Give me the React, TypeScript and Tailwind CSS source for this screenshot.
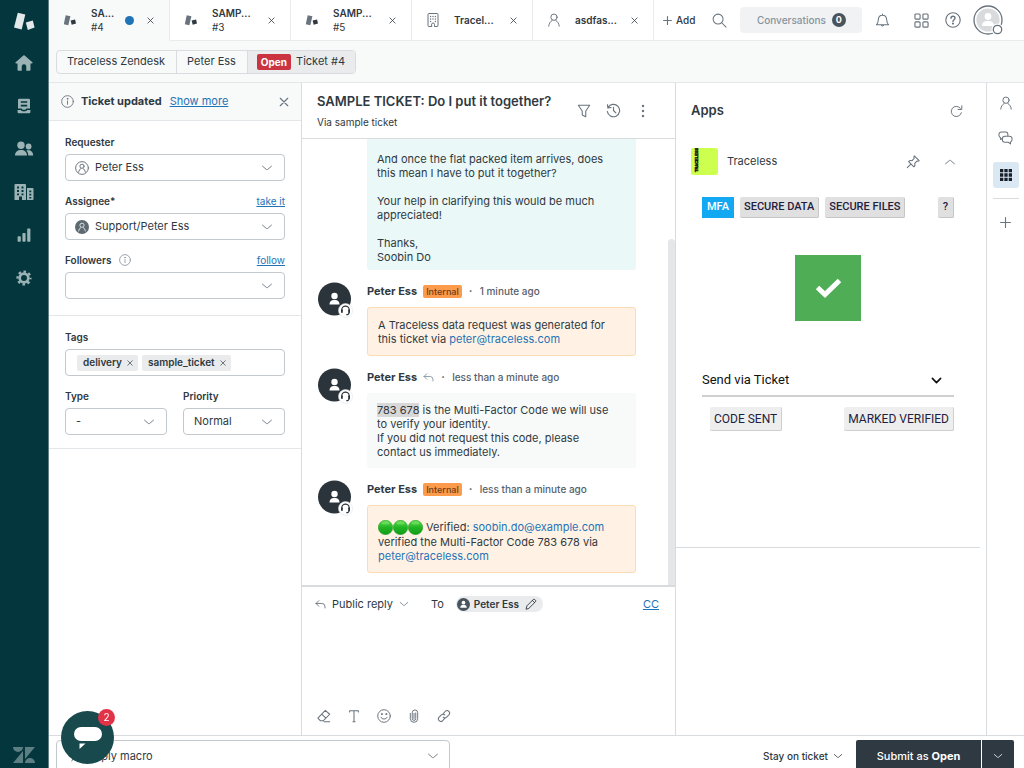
import React from "react";

type IconProps = { className?: string };
type SvgProps = IconProps & { children: React.ReactNode; box?: string; sw?: number };

function Line({ className = "size-3", children, box = "0 0 16 16", sw = 1.2 }: SvgProps) {
  return (
    <svg className={`shrink-0 ${className}`} viewBox={box} fill="none" stroke="currentColor" strokeWidth={sw} strokeLinecap="round" strokeLinejoin="round" aria-hidden="true">
      {children}
    </svg>
  );
}

function Solid({ className = "size-4", children, box = "0 0 20 20" }: SvgProps) {
  return (
    <svg className={`shrink-0 ${className}`} viewBox={box} fill="currentColor" aria-hidden="true">
      {children}
    </svg>
  );
}

const Chevron = ({ className = "size-3" }: IconProps) => (
  <Line className={className}><path d="M2 5.5l5.3 4.6c.4.35 1 .35 1.4 0L14 5.5" /></Line>
);
const Cross = ({ className = "size-2" }: IconProps) => (
  <Line className={className} box="0 0 8 8" sw={0.9}><path d="M1 1l6 6M7 1L1 7" /></Line>
);
const Person = ({ className = "size-[14px]" }: IconProps) => (
  <Line className={className} sw={1.1}><circle cx="8" cy="4.8" r="3.6" /><path d="M2 15c.3-3 1.800-5.200 4-6.600M14 15c-.3-3-1.800-5.200-4-6.600" /></Line>
);
const Building = ({ className = "size-[14px]" }: IconProps) => (
  <Line className={className} box="0 0 14 14" sw={1}>
    <path d="M5.500 13.500H3a1 1 0 0 1-1-1v-11a1 1 0 0 1 1-1h8a1 1 0 0 1 1 1v11a1 1 0 0 1-1 1H8.500v-2a1.500 1.500 0 0 0-3 0z" />
    <path d="M4.600 3.500h.01M7 3.500h.01M9.400 3.500h.01M4.600 6h.01M7 6h.01M9.400 6h.01M4.600 8.500h.01M9.400 8.500h.01" strokeWidth="1.400" />
  </Line>
);
const Info = ({ className = "size-3" }: IconProps) => (
  <Line className={className} sw={1.1}><circle cx="8" cy="8" r="7.2" /><path d="M8 7.200v4.300" /><circle cx="8" cy="4.700" r=".5" fill="currentColor" /></Line>
);
const Reply = ({ className = "size-3" }: IconProps) => (
  <Line className={className} sw={1.3}><path d="M5.500 2.500L1.500 6.500l4 4M1.500 6.500H10a4.500 4.500 0 0 1 4.500 4.500v2" /></Line>
);
const TicketMark = () => (
  <svg className="size-[14px] shrink-0" viewBox="0 0 14 12" aria-hidden="true">
    <path d="M2.700 1.200L7.400 2.200 5.300 11.300.8 10.300z" fill="#68737d" />
    <path d="M7.600 6.600l4.500-1 .9 4-4.300 1.200z" fill="#2f3941" />
  </svg>
);

const navIcons: { name: string; icon: React.ReactNode }[] = [
  { name: "Home", icon: <Solid className="size-[18px]"><path d="M9.300 1.600a1 1 0 0 1 1.400 0l8.600 7.600c.6.600.3 1.300-.5 1.300h-1.600v7a1 1 0 0 1-1 1h-3.700v-4.600a2.500 2.500 0 0 0-5 0v4.600H3.800a1 1 0 0 1-1-1v-7H1.200c-.8 0-1.100-.7-.5-1.300z" /></Solid> },
  { name: "Views", icon: <Solid className="size-4"><path fillRule="evenodd" d="M4 1h12a1.500 1.500 0 0 1 1.500 1.500V13H13c-.4 1.300-1.500 1.800-3 1.800S7.400 14.300 7 13H2.500V2.500A1.500 1.500 0 0 1 4 1zm2 3v2h8V4zm0 4.500v2h8v-2zM2 15h4c.8 1.300 2.200 1.800 4 1.800s3.200-.5 4-1.800h4v2.500a1.500 1.500 0 0 1-1.500 1.500h-13A1.500 1.500 0 0 1 2 17.500z" /></Solid> },
  { name: "Customers", icon: <Solid className="size-5"><circle cx="7" cy="6.300" r="3.700" /><circle cx="14.600" cy="7.500" r="2.900" /><path d="M1 16.500c0-3.500 2.500-5.500 6-5.500s6 2 6 5.500zM14.300 16.500c0-2-.8-3.800-2-4.900 3.800-1.200 6.900 1 6.900 4.900z" /></Solid> },
  { name: "Organizations", icon: <Solid className="size-5"><path fillRule="evenodd" d="M1.500 2h9.500a1 1 0 0 1 1 1v15H8v-3.500H5V18H1a.5.5 0 0 1-.5-.5V3a1 1 0 0 1 1-1zM3 4.500v2h2v-2zm4.500 0v2h2v-2zM3 8v2h2V8zm4.500 0v2h2V8zM3 11.400v1.800h2v-1.800zm4.500 0v1.800h2v-1.800zM13 6h5.500a1 1 0 0 1 1 1v10a1 1 0 0 1-1 1H13zm2.300 2.500v1.800h2V8.500zm0 3.300v1.800h2v-1.800zm0 3.200v1.500h2V15z" /></Solid> },
  { name: "Reporting", icon: <Solid className="size-4"><rect x="2" y="11.500" width="4" height="7" rx="1" /><rect x="8" y="7.500" width="4" height="11" rx="1" /><rect x="14" y="2" width="4" height="16.500" rx="1" /></Solid> },
  { name: "Admin", icon: <svg className="size-4 shrink-0" viewBox="0 0 20 20" fill="none" stroke="currentColor" aria-hidden="true"><circle cx="10" cy="10" r="5.400" strokeWidth="3.400" /><circle cx="10" cy="10" r="8.100" strokeWidth="2.800" strokeDasharray="3.200 3.160" strokeDashoffset="1.600" /></svg> },
];

function Sidebar() {
  return (
    <nav className="flex w-[49px] shrink-0 flex-col items-center border-r border-[#5f7f84] bg-[#03363d] text-[#9cb3b5]" aria-label="Main">
      <svg className="mt-3 h-[19px] w-[22px] shrink-0" viewBox="0 0 22 19" aria-hidden="true">
        <path d="M4.800.8l7.500 1.800-3.600 15L1 15.500z" fill="#e3e8e8" />
        <path d="M12.800 10.600l7-2 1.800 7-6.800 2.400z" fill="#e3e8e8" />
      </svg>
      <ul className="mt-3 flex w-full flex-col">
        {navIcons.map((n) => (
          <li key={n.name}>
            <button aria-label={n.name} className="flex h-[43px] w-full items-center justify-center pb-1">{n.icon}</button>
          </li>
        ))}
      </ul>
      <svg className="mt-auto mb-1 h-[18px] w-[22px] shrink-0 text-[#5c7f83]" viewBox="0 0 22 18" fill="currentColor" aria-hidden="true">
        <path d="M0 1h10a5 5 0 0 1-10 0zM10 5v12H0zM12 1h10L12 13zM12 17a5 5 0 0 1 10 0z" />
      </svg>
    </nav>
  );
}

type Tab = { title: string; sub?: string; kind: "ticket" | "org" | "user"; active?: boolean };
const tabs: Tab[] = [
  { title: "SA...", sub: "#4", kind: "ticket", active: true },
  { title: "SAMP...", sub: "#3", kind: "ticket" },
  { title: "SAMP...", sub: "#5", kind: "ticket" },
  { title: "Tracel...", kind: "org" },
  { title: "asdfas...", kind: "user" },
];

function TabItem({ tab }: { tab: Tab }) {
  return (
    <div className={`flex w-[121px] shrink-0 items-center border-r border-b border-r-[#e9ebed] pr-[13px] pl-[14px] ${tab.active ? "border-b-[#f8f9f9] bg-[#f8f9f9]" : "border-b-[#e9ebed]"}`}>
      <button className="flex flex-1 items-center gap-[14px] text-left text-[#68737d]">
        {tab.kind === "ticket" ? <TicketMark /> : tab.kind === "org" ? <Building /> : <Person />}
        <span className="text-[10px] leading-[14px] text-[#2f3941]">
          <span className="block font-semibold">{tab.title}</span>
          {tab.sub && <span className="block">{tab.sub}</span>}
        </span>
      </button>
      {tab.active && <span className="mr-[10px] size-[9px] rounded-full bg-[#1f73b7]" />}
      <button aria-label="Close tab" className="flex size-3 items-center justify-center text-[#2f3941]"><Cross className="size-[7px]" /></button>
    </div>
  );
}

function TopBar() {
  return (
    <header className="flex h-[41px] shrink-0 bg-white">
      {tabs.map((t, i) => <TabItem key={i} tab={t} />)}
      <div className="flex flex-1 items-center border-b border-[#e9ebed] pl-[9px] text-[#68737d]">
        <button className="flex items-center gap-1 text-[10px] font-medium text-[#2f3941]">
          <Line className="size-[9px] text-[#68737d]" box="0 0 8 8" sw={1}><path d="M4 .5v7M.5 4h7" /></Line>Add
        </button>
        <button aria-label="Search" className="ml-[17px]">
          <Line className="size-[15px]" sw={1.1}><circle cx="6.500" cy="6.500" r="5.300" /><path d="M10.400 10.400l4.600 4.600" /></Line>
        </button>
        <button className="ml-[13px] flex h-[26px] w-[122px] items-center justify-center gap-[6px] rounded-sm bg-[#f1f2f4] text-[10px] font-medium text-[#87929d]">
          Conversations
          <span className="flex size-[14px] items-center justify-center rounded-full bg-[#49545c] text-[9px] font-bold text-white">0</span>
        </button>
        <div className="ml-auto flex items-center pr-[21px]">
          <button aria-label="Notifications" className="mr-6">
            <Line className="size-[15px]" sw={1.1}><path d="M1.500 12.500c1.700-1.300 1.900-3 2-5C3.600 4.300 5.300 2.300 8 2.300s4.400 2 4.500 5.200c.1 2 .3 3.700 2 5zM8 2.300V1M6.700 12.800c.2 1.400 2.400 1.400 2.600 0" /></Line>
          </button>
          <button aria-label="Products" className="mr-4">
            <Line className="size-[15px]" sw={1.200}><rect x="1" y="1" width="5.500" height="5.500" rx="1" /><rect x="9.500" y="1" width="5.500" height="5.500" rx="1" /><rect x="1" y="9.500" width="5.500" height="5.500" rx="1" /><rect x="9.500" y="9.500" width="5.500" height="5.500" rx="1" /></Line>
          </button>
          <button aria-label="Help" className="mr-3">
            <Line className="size-4" sw={1.100}><circle cx="8" cy="8" r="7.200" /><path d="M6 6.300C6 5 6.900 4.300 8 4.300s2 .7 2 1.900c0 1.500-2 1.500-2 3.200" strokeWidth="1.400" /><circle cx="8" cy="11.600" r=".5" fill="currentColor" /></Line>
          </button>
          <button aria-label="Profile">
            <svg className="size-[30px]" viewBox="0 0 30 30" aria-hidden="true">
              <circle cx="15" cy="15" r="14" fill="#fff" stroke="#68737d" strokeWidth="1.300" />
              <circle cx="15" cy="15" r="11.600" fill="#d8dadc" />
              <circle cx="15" cy="11.500" r="3.400" fill="#fff" />
              <path d="M9 21c0-4 2.500-5 6-5s6 1 6 5z" fill="#fff" />
              <circle cx="24.500" cy="24.500" r="6" fill="#fff" />
              <circle cx="24.500" cy="24.500" r="4.200" fill="#fff" stroke="#68737d" strokeWidth="1.300" />
            </svg>
          </button>
        </div>
      </div>
    </header>
  );
}

function Breadcrumb() {
  return (
    <div className="flex h-[42px] shrink-0 items-center border-b border-[#e4e7e9] bg-[#f8f9f9] px-[7px]">
      <div className="flex h-6 overflow-hidden rounded-sm border border-[#d8dcde] text-[11px] text-[#2f3941]">
        <button className="border-r border-[#d8dcde] pr-[11px] pl-[10px]">Traceless Zendesk</button>
        <button className="border-r border-[#d8dcde] pr-[11px] pl-[10px]">Peter Ess</button>
        <button className="flex items-center gap-[5px] bg-[#e9ebed] pr-[10px] pl-[9px]">
          <span className="rounded-xs bg-[#cc3340] px-1 text-[10px] leading-4 font-bold text-white">Open</span>
          Ticket #4
        </button>
      </div>
    </div>
  );
}

function SelectBox({ id, value, icon }: { id: string; value: string; icon?: React.ReactNode }) {
  return (
    <div className="relative">
      <select id={id} defaultValue={value} className={`block h-[27px] w-full appearance-none rounded-sm border border-[#c2c8cc] bg-white pr-7 text-[11px] text-[#2f3941] ${icon ? "pl-[29px]" : "pl-[10px]"}`}>
        <option value={value}>{value}</option>
      </select>
      {icon && <span className="pointer-events-none absolute inset-y-0 left-[10px] flex items-center text-[#68737d]">{icon}</span>}
      <span className="pointer-events-none absolute inset-y-0 right-3 flex items-center text-[#68737d]"><Chevron /></span>
    </div>
  );
}

function FieldLabel({ id, text, action, info }: { id: string; text: string; action?: string; info?: boolean }) {
  return (
    <div className="mb-[5px] flex h-[14px] items-center text-[10px]">
      <label htmlFor={id} className="font-semibold text-[#2f3941]">{text}</label>
      {info && <Info className="ml-2 size-3 text-[#87929d]" />}
      {action && <a href="#" className="ml-auto text-[#1f73b7] underline">{action}</a>}
    </div>
  );
}

function Tag({ text }: { text: string }) {
  return (
    <span className="flex h-4 items-center gap-[5px] rounded-xs bg-[#e9ebed] pr-[5px] pl-[6px] text-[10px] font-semibold text-[#2f3941]">
      {text}
      <button aria-label={`Remove ${text}`}><Cross className="size-[6px]" /></button>
    </span>
  );
}

function TicketFields() {
  return (
    <aside className="w-[253px] shrink-0 border-r border-[#d8dcde]">
      <div className="flex h-[38px] items-center border-b border-[#e4e7e9] bg-[#f8f9f9] px-3 text-[11px]">
        <Info className="size-[13px] text-[#68737d]" />
        <strong className="ml-[7px] font-bold text-[#2f3941]">Ticket updated</strong>
        <a href="#" className="ml-2 text-[#1f73b7] underline">Show more</a>
        <button aria-label="Dismiss" className="ml-auto text-[#68737d]"><Cross className="size-[10px]" /></button>
      </div>
      <div className="flex flex-col gap-[13px] border-b border-[#e4e7e9] px-4 pt-[14px] pb-4">
        <div>
          <FieldLabel id="requester" text="Requester" />
          <SelectBox id="requester" value="Peter Ess" icon={<Line className="size-[14px]" sw={1.1}><circle cx="8" cy="8" r="7.300" /><circle cx="8" cy="6" r="2.400" /><path d="M4.200 12.800c.2-2 1.200-3.400 2.500-4.200M11.800 12.800c-.2-2-1.200-3.400-2.500-4.200" /></Line>} />
        </div>
        <div>
          <FieldLabel id="assignee" text="Assignee*" action="take it" />
          <SelectBox id="assignee" value="Support/Peter Ess" icon={<svg className="size-[14px]" viewBox="0 0 16 16" fill="none" aria-hidden="true"><circle cx="8" cy="8" r="8" fill="#5c6970" /><g stroke="#dfe3e6" strokeWidth="1.100"><circle cx="8" cy="6" r="2.400" /><path d="M4.200 13c.2-2.200 1.200-3.600 2.500-4.400M11.800 13c-.2-2.200-1.200-3.600-2.500-4.400" /></g></svg>} />
        </div>
        <div>
          <FieldLabel id="followers" text="Followers" action="follow" info />
          <SelectBox id="followers" value="" />
        </div>
      </div>
      <div className="flex flex-col gap-[13px] border-b border-[#e4e7e9] px-4 pt-[14px] pb-[13px]">
        <div>
          <FieldLabel id="tags" text="Tags" />
          <div className="flex h-[27px] items-center gap-1 rounded-sm border border-[#c2c8cc] px-[11px]">
            <Tag text="delivery" />
            <Tag text="sample_ticket" />
            <input id="tags" className="w-0 min-w-0 flex-1 text-[11px] outline-none" />
          </div>
        </div>
        <div className="grid grid-cols-2 gap-4">
          <div><FieldLabel id="type" text="Type" /><SelectBox id="type" value="-" /></div>
          <div><FieldLabel id="priority" text="Priority" /><SelectBox id="priority" value="Normal" /></div>
        </div>
      </div>
    </aside>
  );
}

function AgentAvatar() {
  return (
    <svg className="h-9 w-[38px] shrink-0" viewBox="0 0 38 36" aria-hidden="true">
      <circle cx="17.500" cy="17" r="16.500" fill="#2b343b" />
      <circle cx="17.500" cy="14" r="3.200" fill="#fff" />
      <path d="M12.500 22.500c0-3.400 2-4.600 5-4.600s5 1.200 5 4.600z" fill="#fff" />
      <circle cx="28.500" cy="28.500" r="7" fill="#fff" stroke="#d8dcde" strokeWidth=".5" />
      <path d="M24.800 29v-1.200a3.700 3.700 0 0 1 7.400 0V29M32.200 30c0 2-1.200 2.800-3 2.800" fill="none" stroke="#2b343b" strokeWidth="1.100" />
      <path d="M24 27.500h1.800v3.300H24zM31.200 27.500H33v3.300h-1.800z" fill="#2b343b" />
    </svg>
  );
}

function Message({ internal, time, children }: { internal?: boolean; time: string; children: React.ReactNode }) {
  return (
    <article className="flex gap-3 pr-[39px] pl-[15px]">
      <AgentAvatar />
      <div className="min-w-0 flex-1">
        <div className="flex h-[18px] items-center text-[11px] text-[#56616b]">
          <span className="font-bold text-[#2f3941]">Peter Ess</span>
          {internal ? (
            <span className="ml-[6px] rounded-xs bg-[#fb9b4b] px-[3px] text-[9px] leading-[13px] font-medium text-[#703b15]">Internal</span>
          ) : (
            <Reply className="ml-[6px] size-[11px] text-[#87929d]" />
          )}
          <span className="ml-[5px] w-2 text-center font-bold">·</span>
          <span className="ml-[5px] text-[10px] font-medium">{time}</span>
        </div>
        <div className={`mt-[7px] rounded-[3px] px-[10px] pt-[10px] pb-[9px] text-[11px] leading-[14px] text-[#2f3941] ${internal ? "border border-[#fcdcb4] bg-[#fff2e4]" : "bg-[#f8f9f9]"}`}>
          {children}
        </div>
      </div>
    </article>
  );
}

const Mail = ({ to }: { to: string }) => <a href={`mailto:${to}`} className="text-[#1f73b7]">{to}</a>;

const GreenBall = () => (
  <svg className="mt-1 inline size-[15px] align-[-4px]" viewBox="0 0 15 15" aria-hidden="true">
    <defs><linearGradient id="ball" x1="0" y1="0" x2="0" y2="1"><stop offset="0" stopColor="#5fdd4e" /><stop offset=".5" stopColor="#22b523" /><stop offset="1" stopColor="#109c1a" /></linearGradient></defs>
    <circle cx="7.500" cy="7.500" r="7.200" fill="url(#ball)" stroke="#17941c" strokeWidth=".5" />
    <ellipse cx="7.500" cy="3" rx="4" ry="1.600" fill="#a4f08f" opacity=".35" />
  </svg>
);

function Conversation() {
  return (
    <main className="flex min-w-0 flex-1 flex-col border-r border-[#d8dcde]">
      <div className="flex h-14 shrink-0 items-center border-b border-[#d8dcde] pr-[25px] pl-[15px] text-[#68737d]">
        <div className="text-[#2f3941]">
          <h1 className="text-[13px] leading-5 font-semibold">SAMPLE TICKET: Do I put it together?</h1>
          <p className="mt-[3px] text-[10px] leading-4">Via sample ticket</p>
        </div>
        <div className="ml-auto flex items-center gap-[15px]">
          <button aria-label="Filter"><Line className="size-[14px]" sw={1.200}><path d="M1.500 1.500h13L10 8v6.500L6 12.500V8z" /></Line></button>
          <button aria-label="Events"><Line className="size-[15px]" sw={1.200}><path d="M2.200 4.800A6.600 6.600 0 1 1 1.400 9M1.600 1.800l.4 3.400 3.400-.4M8 4.500V8l2.500 2.500" /></Line></button>
          <button aria-label="More"><Solid className="size-[14px]" box="0 0 14 14"><circle cx="7" cy="2" r="1.200" /><circle cx="7" cy="7" r="1.200" /><circle cx="7" cy="12" r="1.200" /></Solid></button>
        </div>
      </div>
      <div className="relative flex min-h-0 flex-1 flex-col justify-end gap-3 overflow-hidden pb-3">
        <div className="mr-[39px] ml-[65px] flex-1 rounded-b-[3px] bg-[#eaf8f8] px-[10px] pt-[13px] text-[11px] leading-[14px] text-[#2f3941]">
          <p>And once the flat packed item arrives, does<br />this mean I have to put it together?</p>
          <p className="mt-[14px]">Your help in clarifying this would be much<br />appreciated!</p>
          <p className="mt-[14px]">Thanks,<br />Soobin Do</p>
        </div>
        <Message internal time="1 minute ago">
          A Traceless data request was generated for<br />this ticket via <Mail to="peter@traceless.com" />
        </Message>
        <Message time="less than a minute ago">
          <span className="bg-[#d8d8d8]">783 678</span> is the Multi-Factor Code we will use<br />to verify your identity.<br />If you did not request this code, please<br />contact us immediately.
        </Message>
        <Message internal time="less than a minute ago">
          <GreenBall /><GreenBall /><GreenBall /> Verified: <Mail to="soobin.do@example.com" /><br />verified the Multi-Factor Code 783 678 via<br /><Mail to="peter@traceless.com" />
        </Message>
        <span className="absolute right-0 bottom-0 h-[346px] w-[7px] rounded-t-sm bg-[#e4e6e8]" />
      </div>
      <section className="flex h-[150px] shrink-0 flex-col border-t-2 border-[#d8dcde]">
        <div className="flex h-[34px] items-center pr-4 pl-[13px] text-[11px] text-[#2f3941]">
          <button className="flex items-center gap-[6px]">
            <Reply className="size-[11px] text-[#68737d]" />Public reply<Chevron className="size-[10px] text-[#68737d]" />
          </button>
          <span className="ml-[22px]">To</span>
          <button className="ml-3 flex h-4 items-center gap-1 rounded-full bg-[#e9ebed] pr-[6px] pl-[1px] text-[10px] font-semibold">
            <svg className="size-[13px]" viewBox="0 0 14 14" aria-hidden="true"><circle cx="7" cy="7" r="7" fill="#49545c" /><circle cx="7" cy="5" r="2" fill="#fff" /><path d="M3.500 10.500c0-2.400 1.200-3 3.500-3s3.500.6 3.500 3z" fill="#fff" /></svg>
            Peter Ess
            <Line className="ml-[2px] size-3" sw={1.200}><path d="M1.500 14.500l1-4L11 2a1.500 1.500 0 0 1 2 0l1 1a1.500 1.500 0 0 1 0 2l-8.500 8.500zM9.800 3.200l3 3" /></Line>
          </button>
          <a href="#" className="ml-auto text-[#1f73b7] underline">CC</a>
        </div>
        <textarea aria-label="Reply" className="min-h-0 flex-1 resize-none px-4 text-[11px] outline-none" />
        <div className="flex h-[38px] items-center gap-4 px-[15px] text-[#68737d]">
          <button aria-label="Clear formatting"><Line className="size-[14px]" sw={1.200}><path d="M9.500 1.500l5 4.500-7.500 7.500H4L1 10.500zM5.300 5.800l4.900 4.700M8 14.500h6.500" /></Line></button>
          <button aria-label="Text"><Line className="size-[14px]" sw={1.200}><path d="M3 3.500V2h10v1.500M8 2v12.500M6.800 14.500h2.400" /></Line></button>
          <button aria-label="Emoji"><Line className="size-[14px]" sw={1.100}><circle cx="8" cy="8" r="7.200" /><path d="M4.500 9.500c1 2.700 6 2.700 7 0" /><circle cx="5.500" cy="5.800" r=".6" fill="currentColor" /><circle cx="10.500" cy="5.800" r=".6" fill="currentColor" /></Line></button>
          <button aria-label="Attach"><Line className="size-[14px]" sw={1.100}><path d="M10 4.500V11a2 2 0 0 1-4 0V4.200a3.100 3.100 0 0 1 6.200 0V11a4.200 4.200 0 0 1-8.400 0V5M8 5v6" /></Line></button>
          <button aria-label="Link"><Line className="size-[14px]" sw={1.200}><path d="M7 5.500l2.800-3.200a2.900 2.900 0 0 1 4 4.100L11 9.200a2.700 2.700 0 0 1-3.900 0M9 10.500l-2.800 3.200a2.900 2.900 0 0 1-4-4.100L5 6.800a2.700 2.700 0 0 1 3.900 0" /></Line></button>
        </div>
      </section>
    </main>
  );
}

const grey = "rounded-xs border-r border-b border-[#c6c6c6] bg-[#e0e0e0] text-[#1f2140]";
const light = "h-6 rounded-xs border-r border-b border-[#cfcfcf] bg-[#eeeeee] px-1 text-[12px] font-normal text-[#1f2140]";

function AppsPanel() {
  return (
    <aside className="flex w-[311px] shrink-0 flex-col border-r border-[#d8dcde]">
      <div className="flex h-14 items-center pr-[23px] pl-[15px]">
        <h2 className="text-[13px] font-semibold text-[#2f3941]">Apps</h2>
        <button aria-label="Reload" className="ml-auto text-[#68737d]"><Line className="size-[13px]" sw={1.200}><path d="M14 9.500A6.300 6.300 0 1 1 12.800 4M14.500 1v4.500H10" /></Line></button>
      </div>
      <div className="mr-[6px] flex h-[409px] flex-col border-b border-[#d8dcde] pt-[9px]">
        <div className="flex items-center pr-6 pl-[15px] text-[#68737d]">
          <svg className="size-[27px]" viewBox="0 0 27 27" aria-hidden="true">
            <rect width="27" height="27" rx="2.500" fill="#cdff4e" />
            <text transform="translate(7 24) rotate(-90)" fill="#161616" fontFamily="Liberation Sans Narrow, Liberation Sans, sans-serif" fontWeight="700" fontSize="4" stroke="#161616" strokeWidth=".5">TRACELESS</text>
          </svg>
          <h3 className="ml-[9px] text-[11px] text-[#2f3941]">Traceless</h3>
          <button aria-label="Pin" className="ml-auto"><Line className="size-[14px]" sw={1.200}><path d="M9.500 1l5.500 5.500-1.500.7-1-.2-2.500 2.500c.6 1.700.2 3-1 4L3 7.500c1-1.200 2.300-1.600 4-1L9.300 4 9 2.500zM5.500 10.500L1.500 14.500" /></Line></button>
          <button aria-label="Collapse" className="ml-6"><Chevron className="size-3 rotate-180" /></button>
        </div>
        <div className="flex flex-col px-[26px] pt-[22px] font-['Roboto',sans-serif] text-[11px] font-medium">
          <div className="flex h-[21px] gap-[6px]">
            <button className="bg-[#13a8f2] px-[5px] text-white">MFA</button>
            <button className={`px-1 ${grey}`}>SECURE DATA</button>
            <button className={`px-1 ${grey}`}>SECURE FILES</button>
            <button aria-label="Help" className={`ml-auto px-[5px] ${grey}`}>?</button>
          </div>
          <div className="mt-[37px] flex size-[66px] items-center justify-center self-center bg-[#4fad56]">
            <svg className="h-5 w-[27px]" viewBox="0 0 27 20" aria-hidden="true"><path d="M2.500 9.500l7.500 7L24.500 2.500" fill="none" stroke="#fff" strokeWidth="5" /></svg>
          </div>
          <div className="relative mt-[42px]">
            <select aria-label="Delivery method" className="block h-[34px] w-full appearance-none border-b-2 border-[#d0d0d0] bg-transparent pt-[2px] text-[13px] font-normal text-[#111111]">
              <option>Send via Ticket</option>
            </select>
            <span className="pointer-events-none absolute inset-y-0 right-3 flex items-center text-[#111111]"><Line className="size-[11px]" sw={2.400}><path d="M2 5l6 6 6-6" /></Line></span>
          </div>
          <div className="mt-[10px] flex justify-between pl-2">
            <button className={light}>CODE SENT</button>
            <button className={light}>MARKED VERIFIED</button>
          </div>
        </div>
      </div>
    </aside>
  );
}

function Rail() {
  return (
    <nav aria-label="Context" className="flex w-[37px] shrink-0 flex-col items-center pt-[13px] text-[#68737d]">
      <button aria-label="User"><Person /></button>
      <button aria-label="Side conversations" className="mt-[21px]">
        <Line className="size-[15px]" sw={1.100}><path d="M4.500 8L2.800 9V7.200A3 3 0 0 1 1 4.500V3.700A2.700 2.700 0 0 1 3.700 1h4.600A2.200 2.200 0 0 1 10.500 3.200V5M7.300 5.500h5a2.700 2.700 0 0 1 2.700 2.700v.800c0 1.300-.7 2.200-1.600 2.600v2.200L11 12H7.300a2.600 2.600 0 0 1-2.600-2.600V8.100a2.600 2.600 0 0 1 2.600-2.600z" /></Line>
      </button>
      <button aria-label="Apps" className="mt-4 flex size-[26px] items-center justify-center rounded-[3px] bg-[#dae8f3] text-[#17202a]">
        <Solid className="size-3" box="0 0 12 12"><path d="M0 0h3.300v3.300H0zM4.350 0h3.300v3.300h-3.300zM8.700 0H12v3.300H8.700zM0 4.350h3.300v3.300H0zM4.350 4.350h3.300v3.300h-3.300zM8.700 4.350H12v3.300H8.700zM0 8.700h3.300V12H0zM4.350 8.700h3.300V12h-3.300zM8.700 8.700H12V12H8.700z" /></Solid>
      </button>
      <hr className="mt-[10px] w-[26px] border-[#d8dcde]" />
      <button aria-label="Add" className="mt-[18px]"><Line className="size-[11px]" box="0 0 10 10" sw={1}><path d="M5 .5v9M.5 5h9" /></Line></button>
    </nav>
  );
}

function Footer() {
  return (
    <footer className="flex h-[33px] shrink-0 items-start border-t border-[#d8dcde] pt-1 pr-[10px] pl-[7px]">
      <div className="relative w-[394px]">
        <select aria-label="Macro" className="block h-8 w-full appearance-none rounded-sm border border-[#c2c8cc] pl-[30px] text-[11px] text-[#2f3941]">
          <option>Apply macro</option>
        </select>
        <svg className="pointer-events-none absolute top-[10px] left-3 size-3 text-[#68737d]" viewBox="0 0 12 12" fill="currentColor" aria-hidden="true"><path d="M8 0L2 7h3l-2 5 7-7H7z" /></svg>
        <Chevron className="pointer-events-none absolute top-[10px] right-[11px] size-3 text-[#68737d]" />
      </div>
      <button className="ml-auto flex h-8 items-center gap-[5px] text-[10px] font-medium text-[#2f3941]">
        Stay on ticket<Chevron className="size-[10px]" />
      </button>
      <div className="ml-[13px] flex h-8 gap-px text-[11px] font-medium text-white">
        <button className="w-[125px] rounded-l-xs bg-[#2f3941]">Submit as <b className="font-bold">Open</b></button>
        <button aria-label="Submit options" className="flex w-8 items-center justify-center rounded-r-xs bg-[#2f3941]"><Chevron className="size-[10px]" /></button>
      </div>
    </footer>
  );
}

function ChatLauncher() {
  return (
    <button aria-label="Open chat" className="fixed bottom-1 left-[61px] size-[53px] rounded-full bg-[#17494d]">
      <svg className="mx-auto h-6 w-7" viewBox="0 0 28 24" aria-hidden="true">
        <rect y="1" width="28" height="14" rx="7" fill="#fff" />
        <path d="M5.500 17.500h6l-6 5.500z" fill="#fff" />
      </svg>
      <span className="absolute -top-[2px] -right-[1px] flex size-[17px] items-center justify-center rounded-full bg-[#e23247] text-[10px] text-white">2</span>
    </button>
  );
}

export default function App() {
  return (
    <div className="flex h-screen overflow-hidden bg-white font-['Inter','Liberation_Sans',sans-serif] text-[#2f3941]">
      <Sidebar />
      <div className="flex min-w-0 flex-1 flex-col">
        <TopBar />
        <Breadcrumb />
        <div className="flex min-h-0 flex-1">
          <TicketFields />
          <Conversation />
          <AppsPanel />
          <Rail />
        </div>
        <Footer />
      </div>
      <ChatLauncher />
    </div>
  );
}
